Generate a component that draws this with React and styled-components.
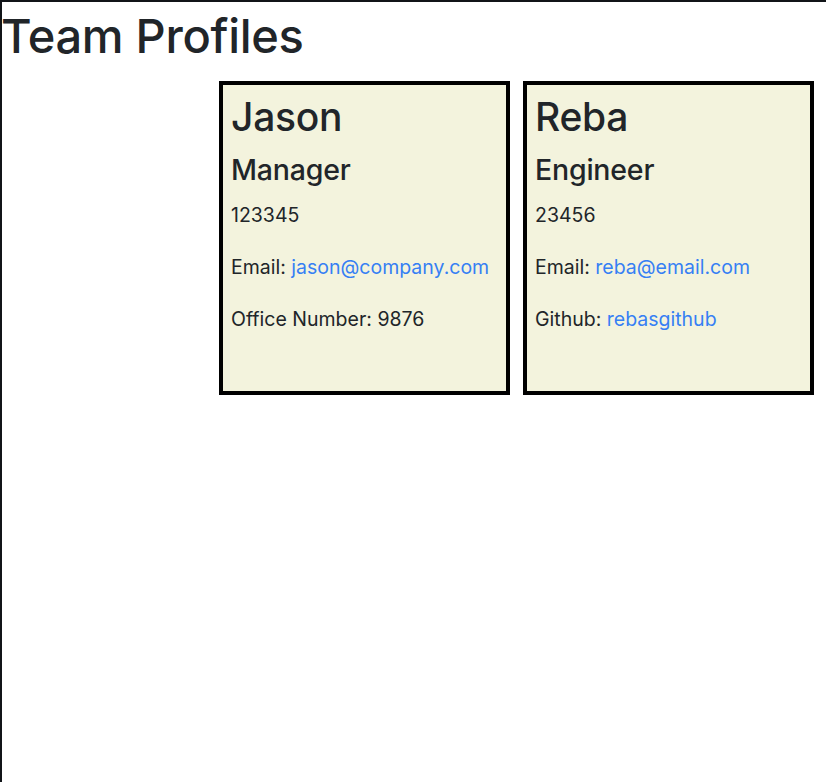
import React from 'react';
import styled, { createGlobalStyle } from 'styled-components';

const GlobalStyle = createGlobalStyle`
  html, body {
    margin: 0;
    padding: 0;
    overflow: hidden;
  }
  body {
    font-family: Inter, "Liberation Sans", Arial, sans-serif;
    color: #212529;
    background: #fff;
  }
`;

const team = [
  {
    name: 'Jason',
    role: 'Manager',
    id: '123345',
    email: 'jason@company.com',
    extra: { label: 'Office Number', value: '9876' },
  },
  {
    name: 'Reba',
    role: 'Engineer',
    id: '23456',
    email: 'reba@email.com',
    extra: { label: 'Github', value: 'rebasgithub', link: true },
  },
];

const Frame = styled.div`
  min-height: 782px;
  box-sizing: border-box;
  border-top: 2px solid #111418;
  border-left: 2px solid #111418;
  padding-top: 6px;
`;

const Title = styled.h1`
  margin: 0 0 17px -1px;
  font-size: 47px;
  font-weight: 500;
  line-height: 1.2;
  letter-spacing: -0.3px;
`;

const CardRow = styled.div`
  display: flex;
  gap: 13px;
  margin-left: 217px;
`;

const Card = styled.div`
  width: 291px;
  height: 314px;
  box-sizing: border-box;
  border: 4px solid #000;
  background: #f3f3dd;
  padding: 9px 8px 8px;
`;

const Name = styled.h2`
  margin: 0 0 11px;
  font-size: 39px;
  font-weight: 500;
  line-height: 1.2;
  letter-spacing: -0.3px;
`;

const Role = styled.h3`
  margin: 0 0 12px;
  font-size: 28.5px;
  font-weight: 500;
  line-height: 1.25;
  letter-spacing: -0.2px;
`;

const Info = styled.p`
  margin: 0 0 22px;
  font-size: 19.5px;
  line-height: 30px;
`;

const Link = styled.a`
  color: #367ff4;
  text-decoration: none;
`;

const ProfileCard = ({ member }) => (
  <Card>
    <Name>{member.name}</Name>
    <Role>{member.role}</Role>
    <Info>{member.id}</Info>
    <Info>
      Email: <Link href={`mailto:${member.email}`}>{member.email}</Link>
    </Info>
    <Info>
      {member.extra.label}:{' '}
      {member.extra.link ? (
        <Link href="#">{member.extra.value}</Link>
      ) : (
        member.extra.value
      )}
    </Info>
  </Card>
);

export default function App() {
  return (
    <>
      <GlobalStyle />
      <Frame>
        <Title>Team Profiles</Title>
        <CardRow>
          {team.map((member) => (
            <ProfileCard key={member.name} member={member} />
          ))}
        </CardRow>
      </Frame>
    </>
  );
}
